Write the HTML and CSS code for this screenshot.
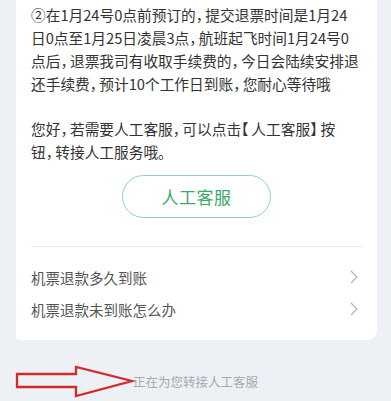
FILE: index.html
```html
<!DOCTYPE html>
<html lang="zh-CN">
<head>
<meta charset="utf-8">
<link rel="stylesheet" href="styles.css">
</head>
<body>
<div class="page">
  <div class="card">
    <p class="msg">②在1月24号0点前预订的<span class="pc">，</span>提交退票时间是1月24<br>日0点至1月25日凌晨3点<span class="pc">，</span>航班起飞时间1月24号0<br>点后<span class="pc">，</span>退票我司有收取手续费的<span class="pc">，</span>今日会陆续安排退<br>还手续费<span class="pc">，</span>预计10个工作日到账<span class="pc">，</span>您耐心等待哦</p>
    <p class="msg">您好<span class="pc">，</span>若需要人工客服<span class="pc">，</span>可以点击<span class="pb">【</span>人工客服<span class="pb">】</span>按<br>钮<span class="pc">，</span>转接人工服务哦。</p>
    <div class="btn-wrap"><button class="btn">人工客服</button></div>
    <div class="divider"></div>
    <ul class="faq">
      <li class="faq-item"><span>机票退款多久到账</span><svg class="chev" width="8" height="14" viewBox="0 0 8 14"><path d="M1 1 L7 7 L1 13" fill="none" stroke="#b0b0b0" stroke-width="1.1"/></svg></li>
      <li class="faq-item"><span>机票退款未到账怎么办</span><svg class="chev" width="8" height="14" viewBox="0 0 8 14"><path d="M1 1 L7 7 L1 13" fill="none" stroke="#b0b0b0" stroke-width="1.1"/></svg></li>
    </ul>
  </div>
  <div class="status">正在为您转接人工客服</div>
  <svg class="arrow" width="122" height="36" viewBox="0 0 122 36">
    <polygon points="2,9 61,9 61,2 117,16 61,31 61,22 2,22" fill="none" stroke="#d42a2c" stroke-width="2.3" stroke-linejoin="miter"/>
  </svg>
</div>
</body>
</html>
```
FILE: styles.css
```css
* { box-sizing: border-box; }
html, body { margin: 0; padding: 0; }
body {
  background: #edf0f5;
  font-family: "Noto Sans CJK SC", "Noto Sans", sans-serif;
  width: 391px;
  height: 401px;
  overflow: hidden;
}
.page { position: relative; height: 401px; }
.card {
  margin: 0 14px 0 16px;
  background: #fff;
  border-radius: 0 0 10px 4px;
  padding: 3px 4px 15px 15px;
}
.msg {
  margin: 0 0 22px 0;
  font-size: 14.7px;
  line-height: 23px;
  color: #333;
  white-space: nowrap;
  font-feature-settings: "halt";
}
.msg + .msg { margin-bottom: 0; }
.pc { letter-spacing: 0.15em; }
.pb { letter-spacing: 0.2em; }
.btn-wrap { display: flex; justify-content: center; padding-top: 12px; padding-right: 11px; }
.btn {
  width: 149px;
  height: 43px;
  border: 1px solid #8fd5aa;
  border-radius: 22px;
  background: #fff;
  color: #3aaa66;
  font-family: inherit;
  font-size: 17px;
  letter-spacing: 0.5px;
}
.divider { height: 1px; background: #ececec; margin: 28px 10px 0 0; }
.faq { list-style: none; margin: 0; padding: 14px 0 0 0; }
.faq-item {
  display: flex;
  justify-content: space-between;
  align-items: center;
  height: 32px;
  font-size: 14.5px;
  color: #555;
}
.chev { margin-right: 15px; }
.status {
  text-align: center;
  margin-top: 32px;
  font-size: 12.5px;
  color: #a7a9ae;
}
.arrow { position: absolute; left: 15px; top: 365px; }
```
